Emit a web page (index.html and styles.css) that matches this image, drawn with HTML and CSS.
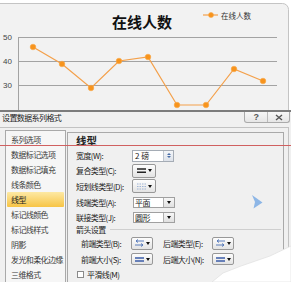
FILE: index.html
```html
<!DOCTYPE html>
<html lang="zh">
  <head>
    <meta charset="UTF-8" />
    <title>设置数据系列格式</title>
    <link rel="stylesheet" href="styles.css">
  </head>
  <body>
    <div class="chart">
      <svg width="291" height="110" viewBox="0 0 291 110">
        <rect x="-6" y="3.5" width="294.5" height="120" rx="6" class="frame" />
        <text x="142" y="28" text-anchor="middle" class="chart-title">在线人数</text>
        <line x1="203" y1="15" x2="218" y2="15" class="series" />
        <circle cx="211" cy="15" r="2.5" class="dot" />
        <text x="221" y="18.5" class="legend-text">在线人数</text>
        <path d="M18 37.5H277M18 61.5H277M18 85.5H277M18.5 37V110" class="grid" />
        <text x="3" y="40" class="axis">50</text>
        <text x="3" y="64" class="axis">40</text>
        <text x="3" y="88" class="axis">30</text>
        <polyline points="33,47 62,64 91,88 119,61 148,57 177,105 206,105 234,69 263,81" class="series" />
        <circle cx="33" cy="47" r="2.8" class="dot" />
        <circle cx="62" cy="64" r="2.8" class="dot" />
        <circle cx="91" cy="88" r="2.8" class="dot" />
        <circle cx="119" cy="61" r="2.8" class="dot" />
        <circle cx="148" cy="57" r="2.8" class="dot" />
        <circle cx="177" cy="105" r="2.8" class="dot" />
        <circle cx="206" cy="105" r="2.8" class="dot" />
        <circle cx="234" cy="69" r="2.8" class="dot" />
        <circle cx="263" cy="81" r="2.8" class="dot" />
      </svg>
    </div>

    <div class="dialog">
      <div class="titlebar">
        <span class="title">设置数据系列格式</span>
        <div class="winbtns">
          <span class="help">?</span>
          <span>
            <svg width="8" height="7" viewBox="0 0 8 7"><path d="M1 1L7 6M7 1L1 6" stroke="#555" stroke-width="1.4" /></svg>
          </span>
        </div>
      </div>

      <div class="body">
        <ul class="nav">
          <li>系列选项</li>
          <li>数据标记选项</li>
          <li>数据标记填充</li>
          <li>线条颜色</li>
          <li class="active">线型</li>
          <li>标记线颜色</li>
          <li>标记线样式</li>
          <li>阴影</li>
          <li>发光和柔化边缘</li>
          <li>三维格式</li>
        </ul>

        <div class="panel">
          <div class="heading">线型</div>
          <div class="row">
            <span class="label">宽度(W):</span>
            <div class="spin">
              <span class="val">2 磅</span>
              <span class="spin-btns"><i class="up"></i><i class="down"></i></span>
            </div>
          </div>
          <div class="row">
            <span class="label">复合类型(C):</span>
            <div class="dd">
              <svg width="9" height="7" viewBox="0 0 9 7"><path d="M0 2H9M0 5.2H9" stroke="#222" stroke-width="1.4" /></svg>
              <i class="caret"></i>
            </div>
          </div>
          <div class="row row-16">
            <span class="label">短划线类型(D):</span>
            <div class="dd">
              <svg width="9" height="7" viewBox="0 0 9 7"><path d="M0 1H9M0 3.5H9M0 6H9" stroke="#9fb4d6" stroke-width="1" stroke-dasharray="1.5 1" /></svg>
              <i class="caret"></i>
            </div>
          </div>
          <div class="row row-16">
            <span class="label">线端类型(A):</span>
            <div class="sel"><span class="val">平面</span><span class="sel-btn"><i class="caret"></i></span></div>
          </div>
          <div class="row row-14">
            <span class="label">联接类型(J):</span>
            <div class="sel"><span class="val">圆形</span><span class="sel-btn"><i class="caret"></i></span></div>
          </div>
          <div class="section">箭头设置</div>
          <div class="row row-18 sub">
            <span class="label">前端类型(B):</span>
            <div class="dd dd-sm">
              <svg width="9" height="8" viewBox="0 0 9 8"><path d="M1 2H9M3 0.5L1 2L3 3.5M0 6H8M6 4.5L8 6L6 7.5" stroke="#4a6fb5" stroke-width="0.9" fill="none" /></svg>
              <i class="caret"></i>
            </div>
            <span class="label label-2">后端类型(E):</span>
            <div class="dd dd-sm">
              <svg width="9" height="8" viewBox="0 0 9 8"><path d="M1 2H9M3 0.5L1 2L3 3.5M0 6H8M6 4.5L8 6L6 7.5" stroke="#4a6fb5" stroke-width="0.9" fill="none" /></svg>
              <i class="caret"></i>
            </div>
          </div>
          <div class="row row-14 sub">
            <span class="label">前端大小(S):</span>
            <div class="dd dd-sm dd-short">
              <svg width="9" height="7" viewBox="0 0 9 7"><path d="M0 2H9M0 5H9" stroke="#3b5ca8" stroke-width="1.6" /></svg>
              <i class="caret"></i>
            </div>
            <span class="label label-2">后端大小(N):</span>
            <div class="dd dd-sm dd-short">
              <svg width="9" height="7" viewBox="0 0 9 7"><path d="M0 2H9M0 5H9" stroke="#3b5ca8" stroke-width="1.6" /></svg>
              <i class="caret"></i>
            </div>
          </div>
          <div class="row row-16 check-row">
            <span class="checkbox"></span>
            <span>平滑线(M)</span>
          </div>
        </div>
      </div>

      <!-- annotation line and screenshot artifacts drawn over the dialog -->
      <div class="red-line"></div>
      <svg class="cursor" width="11" height="14" viewBox="0 0 11 14"><path d="M0 0L10.5 7.5L1.5 13.5L3 7Z" fill="#8db6e6" /></svg>
      <svg class="tear" width="80" height="40" viewBox="0 0 80 40"><path d="M80 4L59 14L30 24L12 31L1 40H80Z" fill="#fff" stroke="#e2e2e2" stroke-width="0.8" /></svg>
    </div>
  </body>
</html>
```

FILE: styles.css
```css
* {
  margin: 0;
  padding: 0;
  box-sizing: border-box;
}

body {
  width: 291px;
  height: 282px;
  overflow: hidden;
  background: #fff;
  font-family: "Noto Sans CJK SC", sans-serif;
  color: #222;
}

.chart {
  height: 110px;
}

.chart svg {
  display: block;
}

.frame {
  fill: #f2f2f2;
  stroke: #c4c4c4;
}

.chart-title {
  font: bold 15px "Noto Sans CJK SC", sans-serif;
  fill: #111;
}

.legend-text {
  font: 7.5px "Noto Sans CJK SC", sans-serif;
  fill: #333;
}

.axis {
  font: 8px "Liberation Sans", sans-serif;
  fill: #444;
}

.grid {
  stroke: #a3a3a3;
  stroke-width: 1;
  fill: none;
}

.series {
  stroke: #f4a04a;
  stroke-width: 1.2;
  fill: none;
}

.dot {
  fill: #f7941d;
  stroke: #f9a84a;
  stroke-width: 0.6;
}

.dialog {
  position: relative;
  height: 172px;
  background: #f0f0f0;
  border-top: 2px solid #7c7c7c;
  font-size: 8px;
  letter-spacing: -0.6px;
}

.titlebar {
  display: flex;
  justify-content: space-between;
  height: 15px;
}

.title {
  padding-left: 2px;
  line-height: 12px;
}

.winbtns {
  display: flex;
  height: 11px;
  margin-right: 1px;
  border: 1px solid #aaa;
  border-top: none;
  border-radius: 0 0 3px 3px;
  background: linear-gradient(#f7f7f7, #e6e6e6);
}

.winbtns span {
  width: 22px;
  display: flex;
  align-items: center;
  justify-content: center;
}

.winbtns span + span {
  border-left: 1px solid #bbb;
}

.help {
  font: bold 9px "Liberation Sans", sans-serif;
  color: #555;
}

.body {
  display: flex;
  gap: 1px;
  width: 289px;
  height: 155px;
  padding: 0 4px 0 5px;
  border-top: 1px solid #c2c2c2;
  border-right: 1px solid #c2c2c2;
}

.nav {
  width: 61px;
  margin-top: 2px;
  padding: 1px 1px 0;
  list-style: none;
  background: #f6f6f6;
  border: 1px solid #a9a9a9;
  border-bottom: none;
  color: #3a3a3a;
}

.nav li {
  height: 15px;
  line-height: 15px;
  padding-left: 4px;
  white-space: nowrap;
  overflow: hidden;
}

.nav li.active {
  background: linear-gradient(#fde9a4, #f7c445);
  border-radius: 1px;
  color: #222;
}

.panel {
  width: 217px;
  margin-top: 4px;
  padding: 1px 0 0 8px;
  border: 1px solid #a9a9a9;
  border-bottom: none;
}

.heading {
  height: 14px;
  line-height: 14px;
  font-size: 10.5px;
  font-weight: bold;
  letter-spacing: 0;
}

.row {
  display: flex;
  align-items: center;
  height: 15px;
}

.row-14 {
  height: 14px;
}

.row-16 {
  height: 16px;
}

.row-18 {
  height: 18px;
}

.label {
  flex: none;
  width: 56px;
  white-space: nowrap;
  overflow: hidden;
}

.sub {
  padding-left: 5px;
}

.sub .label {
  width: 50px;
}

.sub .label-2 {
  width: 49px;
  margin-left: 10px;
}

.spin {
  display: flex;
  width: 42px;
  height: 12px;
  border: 1px solid #a5acb5;
  background: #fff;
}

.spin .val {
  flex: 1;
  padding-left: 2px;
  line-height: 10px;
  letter-spacing: 0;
}

.spin-btns {
  width: 10px;
  display: flex;
  flex-direction: column;
  align-items: center;
  justify-content: center;
  gap: 1px;
  border-left: 1px solid #c0c6ce;
  background: linear-gradient(#f4f6f9, #dde2ea);
}

.up,
.down {
  border-left: 2px solid transparent;
  border-right: 2px solid transparent;
}

.up {
  border-bottom: 2px solid #4a6ea8;
}

.down {
  border-top: 2px solid #4a6ea8;
}

.dd {
  display: flex;
  align-items: center;
  justify-content: center;
  gap: 2px;
  width: 24px;
  height: 14px;
  border: 1px solid #989898;
  border-radius: 2px;
  background: linear-gradient(#fdfdfd, #e3e3e3);
}

.dd-sm {
  width: 22px;
  height: 13px;
}

.dd-short {
  height: 12px;
}

.caret {
  border-left: 2.5px solid transparent;
  border-right: 2.5px solid transparent;
  border-top: 3px solid #111;
}

.sel {
  display: flex;
  width: 42px;
  height: 11px;
  margin-left: 1px;
  border: 1px solid #a0a0a0;
  background: #fff;
}

.sel .val {
  flex: 1;
  padding-left: 1px;
  line-height: 9px;
}

.sel-btn {
  width: 11px;
  display: flex;
  align-items: center;
  justify-content: center;
  border-left: 1px solid #b0b0b0;
  background: linear-gradient(#f7f7f7, #e0e0e0);
}

.section {
  display: flex;
  align-items: center;
  gap: 4px;
  height: 10px;
}

.section::after {
  content: "";
  flex: 1;
  margin-right: 2px;
  border-top: 1px solid #cfcfcf;
}

.check-row {
  padding-left: 1px;
}

.checkbox {
  width: 7px;
  height: 7px;
  margin-right: 3px;
  border: 1px solid #8a8a8a;
  background: #fff;
}

.red-line {
  position: absolute;
  top: 33px;
  left: 0;
  right: 0;
  height: 1px;
  background: #d06060;
}

.cursor {
  position: absolute;
  left: 252px;
  top: 83px;
}

.tear {
  position: absolute;
  right: 0;
  bottom: 0;
}
```
